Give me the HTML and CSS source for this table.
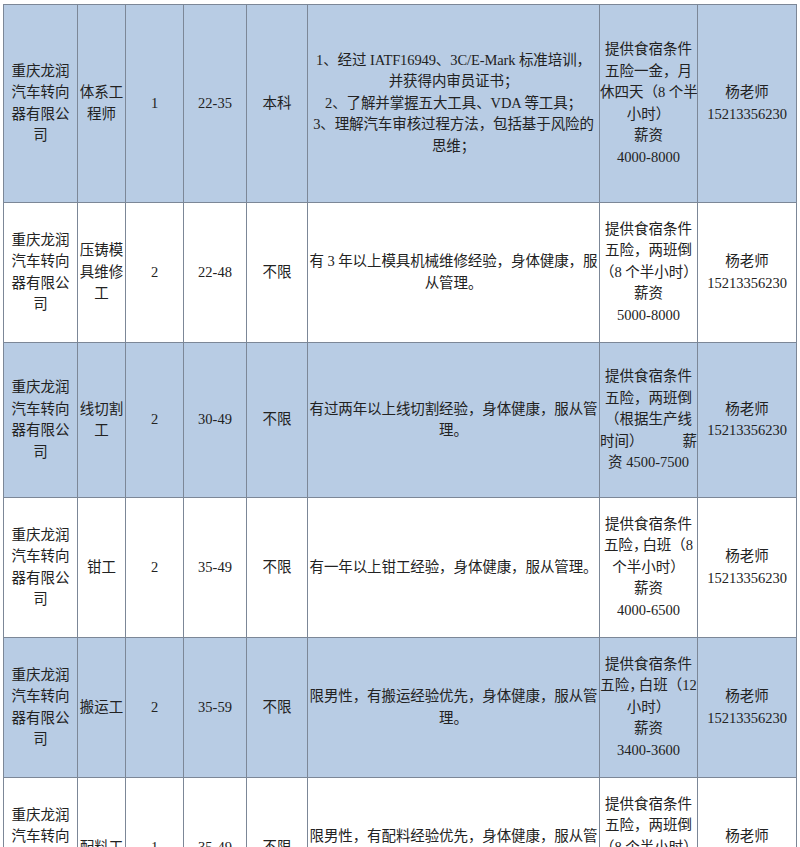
FILE: index.html
```html
<!DOCTYPE html>
<html lang="zh-CN">
<head>
<meta charset="utf-8">
<title>招聘信息</title>
<link rel="stylesheet" href="styles.css">
</head>
<body>
<table class="jobs">
  <colgroup>
    <col class="c-company"><col class="c-post"><col class="c-num"><col class="c-age"><col class="c-edu"><col class="c-req"><col class="c-pay"><col class="c-contact">
  </colgroup>
  <tbody>
    <tr class="row blue r1">
      <td>重庆龙润<br>汽车转向<br>器有限公<br>司</td>
      <td>体系工<br>程师</td>
      <td>1</td>
      <td>22-35</td>
      <td>本科</td>
      <td class="req">1、经过 IATF16949、3C/E-Mark 标准培训，<br>并获得内审员证书；<br>2、了解并掌握五大工具、VDA 等工具；<br>3、理解汽车审核过程方法，包括基于风险的<br>思维；</td>
      <td class="pay">提供食宿条件<br>五险一金，月<br>休四天（8 个半<br>小时）<br>薪资<br>4000-8000</td>
      <td>杨老师<br>15213356230</td>
    </tr>
    <tr class="row white r2">
      <td>重庆龙润<br>汽车转向<br>器有限公<br>司</td>
      <td>压铸模<br>具维修<br>工</td>
      <td>2</td>
      <td>22-48</td>
      <td>不限</td>
      <td class="req">有 3 年以上模具机械维修经验，身体健康，服<br>从管理。</td>
      <td class="pay">提供食宿条件<br>五险，两班倒<br>（8 个半小时）<br>薪资<br>5000-8000</td>
      <td>杨老师<br>15213356230</td>
    </tr>
    <tr class="row blue r3">
      <td>重庆龙润<br>汽车转向<br>器有限公<br>司</td>
      <td>线切割<br>工</td>
      <td>2</td>
      <td>30-49</td>
      <td>不限</td>
      <td class="req">有过两年以上线切割经验，身体健康，服从管<br>理。</td>
      <td class="pay pay-left">
        <div class="ln-c">提供食宿条件</div>
        <div class="ln-c">五险，两班倒</div>
        <div class="ln-c">（根据生产线</div>
        <div class="ln-split"><span>时间）</span><span>薪</span></div>
        <div>资 4500-7500</div>
      </td>
      <td>杨老师<br>15213356230</td>
    </tr>
    <tr class="row white r4">
      <td>重庆龙润<br>汽车转向<br>器有限公<br>司</td>
      <td>钳工</td>
      <td>2</td>
      <td>35-49</td>
      <td>不限</td>
      <td class="req">有一年以上钳工经验，身体健康，服从管理。</td>
      <td class="pay">提供食宿条件<br>五险<span class="half">，</span>白班（8<br>个半小时）<br>薪资<br>4000-6500</td>
      <td>杨老师<br>15213356230</td>
    </tr>
    <tr class="row blue r5">
      <td>重庆龙润<br>汽车转向<br>器有限公<br>司</td>
      <td>搬运工</td>
      <td>2</td>
      <td>35-59</td>
      <td>不限</td>
      <td class="req">限男性，有搬运经验优先，身体健康，服从管<br>理。</td>
      <td class="pay">提供食宿条件<br>五险<span class="half">，</span>白班（12<br>小时）<br>薪资<br>3400-3600</td>
      <td>杨老师<br>15213356230</td>
    </tr>
    <tr class="row white r6">
      <td>重庆龙润<br>汽车转向<br>器有限公<br>司</td>
      <td>配料工</td>
      <td>1</td>
      <td>35-49</td>
      <td>不限</td>
      <td class="req">限男性，有配料经验优先，身体健康，服从管<br>理。</td>
      <td class="pay">提供食宿条件<br>五险，两班倒<br>（8 个半小时）<br>薪资<br>4000-6000</td>
      <td>杨老师<br>15213356230</td>
    </tr>
  </tbody>
</table>
</body>
</html>
```
FILE: styles.css
```css
html, body {
  margin: 0;
  padding: 0;
  background: #ffffff;
}
body {
  padding: 4px 0 0 3px;
  overflow: hidden;
}
.jobs {
  border-collapse: collapse;
  table-layout: fixed;
  width: 794px;
  font-family: "Liberation Serif", "Noto Sans CJK SC", serif;
  font-size: 14.5px;
  line-height: 21.5px;
  color: #222222;
}
.c-company { width: 74px; }
.c-post { width: 48px; }
.c-num { width: 58px; }
.c-age { width: 63px; }
.c-edu { width: 61px; }
.c-req { width: 292px; }
.c-pay { width: 98px; }
.c-contact { width: 99px; }

.jobs td {
  border: 1px solid #7c8797;
  padding: 0;
  text-align: center;
  vertical-align: middle;
  white-space: nowrap;
  overflow: hidden;
}
.blue td { background: #b8cce4; }
.white td { background: #ffffff; }

.r1 { height: 198px; }
.r2 { height: 140px; }
.r3 { height: 155px; }
.r4 { height: 140px; }
.r5 { height: 140px; }
.r6 { height: 140px; }

.req { letter-spacing: -0.1px; }
.half { letter-spacing: -5px; }
.pay-left { text-align: left; padding: 0 3px 0 2px; }
.ln-c { text-align: center; }
.ln-split {
  display: flex;
  justify-content: space-between;
}
```
